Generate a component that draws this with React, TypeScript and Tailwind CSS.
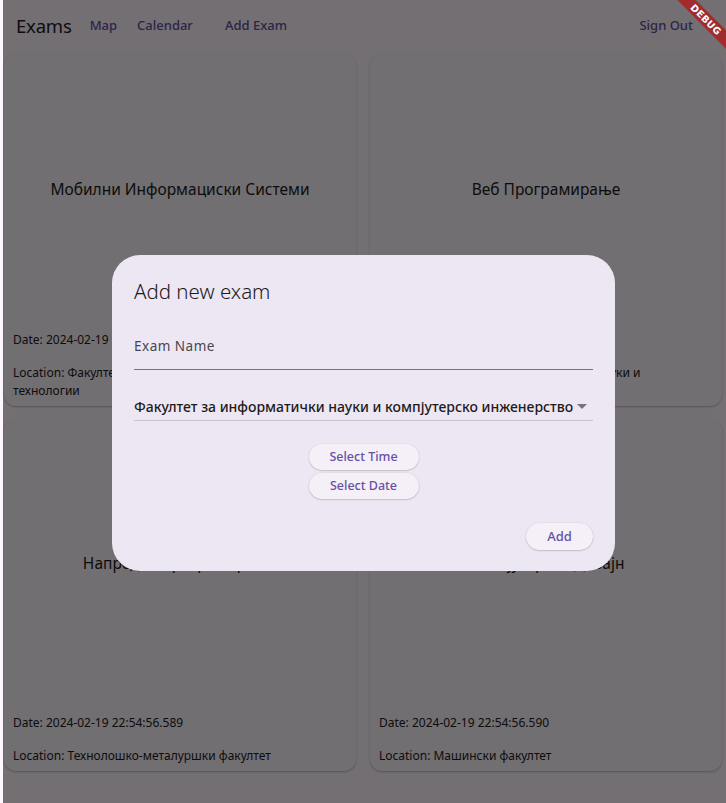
export default function App() {
  const exams = [
    {
      title: 'Мобилни Информациски Системи',
      date: '2024-02-19 22:54:56.587',
      location: 'Факултет за електротехника и информациски технологии',
    },
    {
      title: 'Веб Програмирање',
      date: '2024-02-19 22:54:56.588',
      location: 'Факултет за информатички науки и компјутерско инженерство',
    },
    {
      title: 'Напредно програмирање',
      date: '2024-02-19 22:54:56.589',
      location: 'Технолошко-металуршки факултет',
    },
    {
      title: 'Компјутерски Дизајн',
      date: '2024-02-19 22:54:56.590',
      location: 'Машински факултет',
    },
  ];

  return (
    <div
      className="relative w-[726px] h-[803px] overflow-hidden bg-[#fef7ff] text-[#1d1b20]"
      style={{ fontFamily: '"Noto Sans", "Open Sans", sans-serif' }}
    >
      {/* app bar */}
      <header className="flex items-center h-[52px] pl-4 pr-[21px]">
        <h1 className="text-[18.5px] leading-none tracking-[-0.2px] mr-[8px]">Exams</h1>
        <nav className="flex items-center text-[13px] font-medium text-[#6750a4]">
          <button className="px-[10px] py-2">Map</button>
          <button className="px-[10px] py-2">Calendar</button>
          <button className="px-[10px] py-2 ml-[12px]">Add Exam</button>
        </nav>
        <button className="ml-auto px-3 py-2 text-[13px] font-medium text-[#6750a4]">Sign Out</button>
      </header>

      {/* exam cards */}
      <main className="grid grid-cols-2 gap-x-[14px] gap-y-[13px] pt-[2px] px-[4px]">
        {exams.map((exam, i) => (
          <div
            key={i}
            className="flex flex-col h-[352px] rounded-[12px] bg-[#faf5fb] shadow-[0_1px_2px_rgba(0,0,0,0.25)] px-[9px] pb-[6px]"
          >
            <div className="flex-1 flex items-center justify-center pb-[6px]">
              <span className="text-[15.5px]">{exam.title}</span>
            </div>
            <p className="text-[12px] leading-[16px]">Date: {exam.date}</p>
            <p className="text-[12px] leading-[18px] mt-[16px]">Location: {exam.location}</p>
          </div>
        ))}
      </main>

      {/* scrim */}
      <div className="absolute top-0 bottom-0 left-[3px] right-0 bg-black/[0.55]" />

      {/* dialog */}
      <div className="absolute left-[112px] top-[255px] w-[503px] h-[316px] rounded-[28px] bg-[#ede7f3] px-[22px] pt-[22px] flex flex-col">
        <h2 className="text-[20.5px] leading-[28px] font-light text-[#1d1b20]">Add new exam</h2>

        <div className="mt-[28px] border-b border-[#79747e] pb-[12px]">
          <span className="text-[13.5px] tracking-[0.5px] text-[#49454f]">Exam Name</span>
        </div>

        <div className="mt-[26px] flex items-center border-b border-[#cac4d0] pb-[3px]">
          <span className="flex-1 text-[14px] font-medium text-[#1d1b20]">
            Факултет за информатички науки и компјутерско инженерство
          </span>
          <svg width="10" height="5" viewBox="0 0 10 5" className="mr-[6px]">
            <path d="M0 0 L10 0 L5 5 Z" fill="#757575" />
          </svg>
        </div>

        <div className="mt-[23px] flex flex-col items-center gap-[3px]">
          <button className="h-[26px] w-[110px] rounded-full bg-[#f5f0f8] shadow-[0_0.5px_1.5px_rgba(0,0,0,0.3)] text-[12.5px] font-medium text-[#6750a4]">
            Select Time
          </button>
          <button className="h-[26px] w-[110px] rounded-full bg-[#f5f0f8] shadow-[0_0.5px_1.5px_rgba(0,0,0,0.3)] text-[12.5px] font-medium text-[#6750a4]">
            Select Date
          </button>
        </div>

        <div className="mt-[24px] flex justify-end">
          <button className="h-[27px] w-[67px] rounded-full bg-[#f5f0f8] shadow-[0_0.5px_1.5px_rgba(0,0,0,0.3)] text-[13px] font-medium text-[#6750a4]">
            Add
          </button>
        </div>
      </div>

      {/* debug banner */}
      <div className="absolute left-[664px] top-[13px] w-[84px] h-[13px] rotate-45 bg-[#a12c2e] flex items-center justify-center">
        <span className="text-[9.5px] font-bold text-white tracking-[0.3px] leading-none" style={{ fontFamily: '"DejaVu Sans", sans-serif' }}>
          DEBUG
        </span>
      </div>
    </div>
  );
}
